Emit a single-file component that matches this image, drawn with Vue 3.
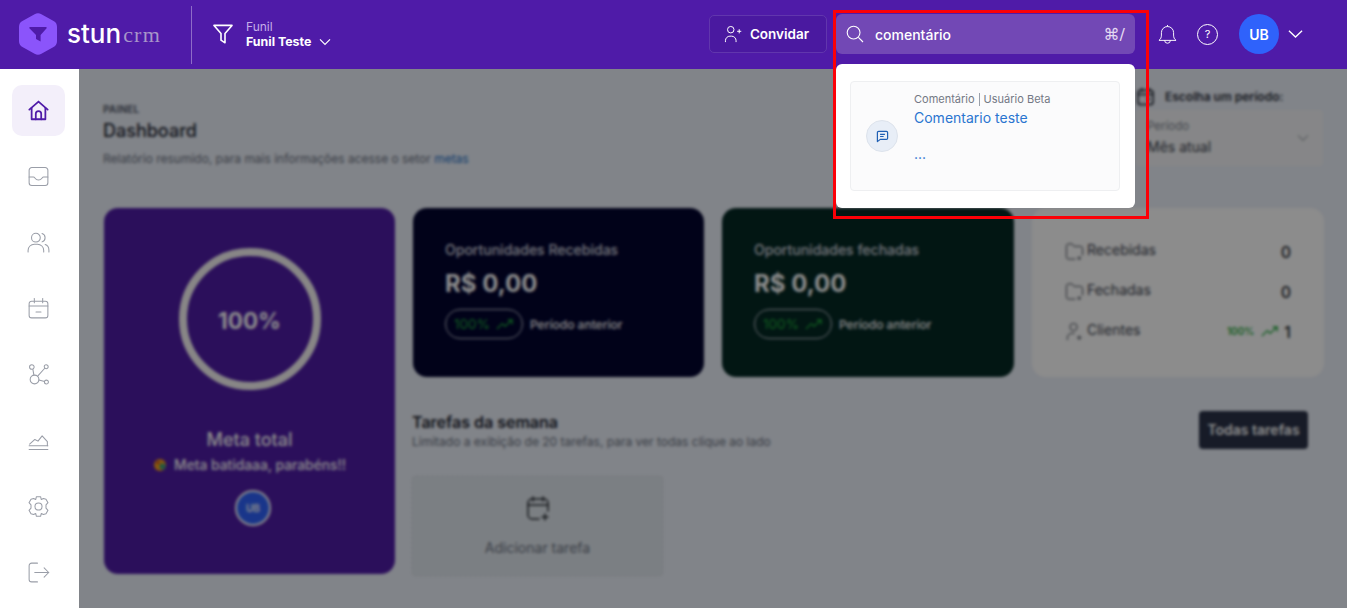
<script setup>
const navItems = [
  { key: 'home', active: true, paths: ['M3.2 11.2 12 3.4l8.8 7.8', 'M5.4 9.6V20.4h13.2V9.6', 'M9.4 20.4v-5.2a2.6 2.6 0 0 1 5.2 0v5.2'] },
  { key: 'inbox', paths: ['M5.6 3.4h12.8a2.6 2.6 0 0 1 2.6 2.6v12a2.6 2.6 0 0 1-2.6 2.6H5.6A2.6 2.6 0 0 1 3 18V6a2.6 2.6 0 0 1 2.6-2.6Z', 'M3 12.4h4.2c1.4 0 1.5 3 4.8 3s3.4-3 4.8-3H21'] },
  { key: 'users', paths: ['M9.5 3.2a4.2 4.2 0 1 1 0 8.4 4.2 4.2 0 0 1 0-8.4Z', 'M2 21v-1.4a6 6 0 0 1 6-6h3a6 6 0 0 1 6 6V21', 'M15.4 3.4a4.2 4.2 0 0 1 0 8', 'M18.4 14c2.2.7 3.6 2.9 3.6 5.4V21'] },
  { key: 'calendar', paths: ['M5.4 5h13.2A2.4 2.4 0 0 1 21 7.4v11.2a2.4 2.4 0 0 1-2.4 2.4H5.4A2.4 2.4 0 0 1 3 18.6V7.4A2.4 2.4 0 0 1 5.4 5Z', 'M3 9.6h18', 'M8 2.4v4', 'M16 2.4v4', 'M9.6 15.4h4.8'] },
  { key: 'share', paths: ['M5.6 2.6a2.2 2.2 0 1 1 0 4.4 2.2 2.2 0 0 1 0-4.4Z', 'M19.4 2.6a1.9 1.9 0 1 1 0 3.8 1.9 1.9 0 0 1 0-3.8Z', 'M19.6 17.4a1.9 1.9 0 1 1 0 3.8 1.9 1.9 0 0 1 0-3.8Z', 'M8.2 12.6a4.2 4.2 0 1 1 0 8.4 4.2 4.2 0 0 1 0-8.4Z', 'M6.6 7l1 5.6', 'M18 6 11.2 13.6', 'M12.4 17.2l5.4 1.6'] },
  { key: 'chart', paths: ['M3 20.6h18', 'M3 17h18', 'M3.5 15.5 8.5 11l3 1.6L15.5 7.5l5 5.5v4'] },
  { key: 'gear', paths: ['M12 8.6a3.4 3.4 0 1 1 0 6.8 3.4 3.4 0 0 1 0-6.8Z', 'M10 2.6h4l.7 2.7 2-.9 2.5.6 1.9 3.3-1.9 2.1v3.2l1.9 2.1-1.9 3.3-2.5.6-2-.9-.7 2.7h-4l-.7-2.7-2 .9-2.5-.6-1.9-3.3 1.9-2.1v-3.2L2.9 8.3l1.9-3.3 2.5-.6 2 .9Z'] },
  { key: 'logout', paths: ['M11 3H5.4A2.4 2.4 0 0 0 3 5.4v13.2A2.4 2.4 0 0 0 5.4 21H11', 'M8.4 12h13.4', 'M17.4 7.6l4.4 4.4-4.4 4.4'] }
]
const stats = [
  { key: 'r', label: 'Recebidas', value: '0', icon: 'folder' },
  { key: 'f', label: 'Fechadas', value: '0', icon: 'folder' },
  { key: 'c', label: 'Clientes', value: '1', icon: 'user', trend: '100%' }
]
const money = [
  { key: 'in', cls: 'navy', title: 'Oportunidades Recebidas' },
  { key: 'out', cls: 'forest', title: 'Oportunidades fechadas' }
]
</script>

<template>
  <div class="app">
    <header class="top">
      <div class="brand">
        <svg class="hex" viewBox="0 0 38 42" aria-hidden="true">
          <path d="M15.6 1.2a7 7 0 0 1 6.8 0l12.2 6.9A6.6 6.6 0 0 1 38 13.8v14.4a6.6 6.6 0 0 1-3.4 5.7l-12.2 6.9a7 7 0 0 1-6.8 0L3.4 33.9A6.6 6.6 0 0 1 0 28.2V13.8a6.6 6.6 0 0 1 3.4-5.7Z" fill="#8b54fb" />
          <path d="M11 14h16a.8.8 0 0 1 .6 1.3L21.6 22v6.6l-4.6-2.6V22l-6.6-6.7A.8.8 0 0 1 11 14Z" fill="#4f1ba8" />
        </svg>
        <span class="stun">stun</span><span class="crm">crm</span>
      </div>
      <div class="divider"></div>
      <div class="funnel">
        <svg class="funnel-ico" viewBox="0 0 20 20" fill="none" stroke="#fff" stroke-width="1.6" stroke-linejoin="round" aria-hidden="true">
          <path d="M1 1.4h18l-7 8.2v9.2l-4-2.6V9.6Z" />
        </svg>
        <div class="funnel-text">
          <span class="funnel-label">Funil</span>
          <span class="funnel-name">Funil Teste</span>
        </div>
        <svg class="chev" viewBox="0 0 12 8" fill="none" stroke="#fff" stroke-width="1.2" aria-hidden="true">
          <path d="M1 1.4 6 6.4l5-5" />
        </svg>
      </div>
      <div class="spacer"></div>
      <button class="invite">
        <svg viewBox="0 0 20 20" fill="none" stroke="#fff" stroke-width="1.1" aria-hidden="true">
          <path d="M7.5 1.6a3.6 3.6 0 1 1 0 7.2 3.6 3.6 0 0 1 0-7.2Z" />
          <path d="M1.6 19v-1.6a5 5 0 0 1 5-5h1.8a5 5 0 0 1 5 5V19" />
          <path d="M14.6 7h4.6M16.9 4.7v4.6" />
        </svg>
        Convidar
      </button>
      <div class="search">
        <svg viewBox="0 0 18 18" fill="none" stroke="#fff" stroke-width="1.1" aria-hidden="true">
          <circle cx="7.6" cy="7.6" r="6.4" />
          <path d="m12.4 12.4 4.6 4.6" />
        </svg>
        <span class="query">comentário</span>
        <span class="shortcut">⌘/</span>
      </div>
      <svg class="bell" viewBox="0 0 20 22" fill="none" stroke="#fff" stroke-width="1" aria-hidden="true">
        <path d="M1 17.2c1.8-1.4 2.6-3 2.6-5.6V9a6.4 6.4 0 0 1 12.8 0v2.6c0 2.6.8 4.2 2.6 5.6Z" />
        <path d="M10 2.6V1M7 17.2a3 3 0 0 0 6 0" />
      </svg>
      <div class="help">?</div>
      <div class="avatar">UB</div>
      <svg class="chev-lg" viewBox="0 0 16 10" fill="none" stroke="#fff" stroke-width="1.4" aria-hidden="true">
        <path d="M1 1.5 8 8.3l7-6.8" />
      </svg>
    </header>

    <div class="shell">
      <aside class="side">
        <div v-for="item in navItems" :key="item.key" class="nav" :class="{ on: item.active }">
          <svg viewBox="0 0 24 24" fill="none" stroke="currentColor" :stroke-width="item.active ? 1.7 : 1" stroke-linecap="round" stroke-linejoin="round" aria-hidden="true">
            <path v-for="d in item.paths" :key="d" :d="d" />
          </svg>
        </div>
      </aside>

      <main class="content">
        <section class="intro">
          <div>
            <div class="crumb">PAINEL</div>
            <h1>Dashboard</h1>
            <p>Relatório resumido, para mais informações acesse o setor <a>metas</a></p>
          </div>
          <div class="period">
            <div class="period-head">
              <svg viewBox="0 0 20 20" fill="none" stroke="#1e2430" stroke-width="1.6" aria-hidden="true">
                <rect x="2" y="3.5" width="16" height="15" rx="3" />
                <path d="M2 8h16M6 1v4M14 1v4M11 13h4" />
              </svg>
              <b>Escolha um período:</b>
            </div>
            <div class="select">
              <div>
                <small>Período</small>
                <span>Mês atual</span>
              </div>
              <svg viewBox="0 0 12 8" fill="none" stroke="#a8acb3" stroke-width="1.2" aria-hidden="true">
                <path d="M1 1.4 6 6.4l5-5" />
              </svg>
            </div>
          </div>
        </section>

        <section class="grid">
          <article class="goal">
            <div class="ring"><span>100%</span></div>
            <h2>Meta total</h2>
            <p class="cheer">
              <svg viewBox="0 0 14 14" aria-hidden="true">
                <circle cx="7" cy="7" r="6" fill="#f7a11a" />
                <circle cx="9.5" cy="8.5" r="3" fill="#3aa07a" />
                <circle cx="5" cy="4.5" r="1.5" fill="#c8401e" />
              </svg>
              Meta batidaaa, parabéns!!
            </p>
            <div class="mini-avatar">UB</div>
          </article>

          <div class="right">
            <div class="cards">
              <article v-for="card in money" :key="card.key" class="money" :class="card.cls">
                <h3>{{ card.title }}</h3>
                <strong>R$ 0,00</strong>
                <div class="compare">
                  <span class="pill">
                    100%
                    <svg viewBox="0 0 20 12" fill="none" stroke="#1fa83a" stroke-width="1.4" aria-hidden="true">
                      <path d="m1 11 6-6 3 3 8-7M13 1h5v5" />
                    </svg>
                  </span>
                  <span class="prev">Período anterior</span>
                </div>
              </article>
              <article class="stats">
                <div v-for="row in stats" :key="row.key" class="stat">
                  <svg viewBox="0 0 20 20" fill="none" stroke="#3a404c" stroke-width="1" aria-hidden="true">
                    <template v-if="row.icon === 'folder'">
                      <path d="M11 18H4a2.5 2.5 0 0 1-2.5-2.5v-11A2.5 2.5 0 0 1 4 2h3.5l2 2.6H16A2.5 2.5 0 0 1 18.5 7v7" />
                      <path d="M15 15v4M13 17h4" />
                    </template>
                    <template v-else>
                      <path d="M9 1.5a3.8 3.8 0 1 1 0 7.6 3.8 3.8 0 0 1 0-7.6Z" />
                      <path d="M2.5 19v-2.5A4.5 4.5 0 0 1 7 12h3" />
                      <path d="M15 14v5M12.5 16.5h5" />
                    </template>
                  </svg>
                  <span class="stat-label">{{ row.label }}</span>
                  <span v-if="row.trend" class="trend">
                    {{ row.trend }}
                    <svg viewBox="0 0 20 12" fill="none" stroke="#1fa83a" stroke-width="1.4" aria-hidden="true">
                      <path d="m1 11 6-6 3 3 8-7M13 1h5v5" />
                    </svg>
                  </span>
                  <span class="stat-value">{{ row.value }}</span>
                </div>
              </article>
            </div>

            <div class="tasks-head">
              <div>
                <h2>Tarefas da semana</h2>
                <p>Limitado a exibição de 20 tarefas, para ver todas clique ao lado</p>
              </div>
              <button class="all">Todas tarefas</button>
            </div>

            <div class="add">
              <svg viewBox="0 0 24 26" fill="none" stroke="#23272e" stroke-width="1.5" stroke-linecap="round" aria-hidden="true">
                <path d="M13 23H6a4 4 0 0 1-4-4V7a4 4 0 0 1 4-4h12a4 4 0 0 1 4 4v8" />
                <path d="M2 9h20M7 1v4M17 1v4M19 18v6M16 21h6" />
              </svg>
              <span>Adicionar tarefa</span>
            </div>
          </div>
        </section>

        <div class="next"></div>
        <div class="veil"></div>
      </main>
    </div>

    <div class="results">
      <div class="hit">
        <div class="hit-ico">
          <svg viewBox="0 0 14 14" fill="none" stroke="#1f5fb4" stroke-width="1.3" stroke-linejoin="round" aria-hidden="true">
            <path d="M2.8 1.5h8.4a1.3 1.3 0 0 1 1.3 1.3v6a1.3 1.3 0 0 1-1.3 1.3H4.6l-3.1 2.4V2.8a1.3 1.3 0 0 1 1.3-1.3Z" />
            <path d="M4.4 4.6h5.2M4.4 7h3.8" />
          </svg>
        </div>
        <div class="hit-text">
          <div class="hit-meta">Comentário <i></i> Usuário Beta</div>
          <div class="hit-title">Comentario teste</div>
          <div class="hit-more">...</div>
        </div>
      </div>
    </div>

    <div class="mark"></div>
  </div>
</template>

<style scoped>
.app {
  position: relative;
  width: 1347px;
  height: 608px;
  overflow: hidden;
  font-family: Inter, "Liberation Sans", sans-serif;
  color: #1e2430;
}
.top {
  height: 69px;
  box-sizing: border-box;
  padding-bottom: 1px;
  background: #4f1ba8;
  display: flex;
  align-items: center;
  color: #fff;
}
.brand {
  display: flex;
  align-items: center;
  width: 191px;
  padding-left: 19px;
  box-sizing: border-box;
  flex: none;
}
.hex {
  width: 38px;
  height: 42px;
  margin-right: 10px;
}
.stun {
  font-family: Inter, sans-serif;
  font-size: 26px;
  font-weight: 500;
  line-height: 1;
}
.crm {
  font-family: "Liberation Serif", serif;
  font-size: 22px;
  letter-spacing: 1.2px;
  color: #a795c9;
  margin-left: 2px;
  margin-top: 2px;
}
.divider {
  width: 1px;
  height: 58px;
  margin-top: 1px;
  background: #8e6cc8;
  flex: none;
}
.funnel {
  display: flex;
  align-items: center;
  margin-left: 21px;
}
.funnel-ico {
  width: 20px;
  height: 20px;
  margin-right: 13px;
}
.funnel-text {
  display: flex;
  flex-direction: column;
  font-size: 12px;
  line-height: 15px;
}
.funnel-label {
  color: #c5aee8;
}
.funnel-name {
  font-size: 12.4px;
  font-weight: 700;
}
.chev {
  width: 12px;
  height: 8px;
  margin: 15px 0 0 8px;
}
.spacer {
  flex: 1;
}
.invite {
  width: 118px;
  height: 38px;
  display: flex;
  align-items: center;
  justify-content: center;
  gap: 8px;
  margin-right: 9px;
  background: #4a19a0;
  border: 1px solid #6136ad;
  border-radius: 5px;
  color: #fff;
  font: 600 13.5px Inter, sans-serif;
  padding: 0 3px 0 0;
}
.invite svg {
  width: 18px;
  height: 18px;
}
.search {
  width: 299px;
  height: 40px;
  box-sizing: border-box;
  display: flex;
  align-items: center;
  padding: 0 10px;
  background: #7248b5;
  border-radius: 6px;
  margin-right: 23px;
}
.search svg {
  width: 18px;
  height: 18px;
  margin-right: 11px;
}
.query {
  flex: 1;
  font-size: 14px;
  font-weight: 500;
}
.shortcut {
  font-size: 16px;
  color: #e3d9f2;
  font-family: "DejaVu Sans", sans-serif;
}
.bell {
  width: 19px;
  height: 21px;
  margin-right: 20px;
}
.help {
  width: 19px;
  height: 19px;
  border: 1px solid #fff;
  border-radius: 50%;
  display: flex;
  align-items: center;
  justify-content: center;
  font-size: 11px;
  margin-right: 21px;
}
.avatar {
  width: 40px;
  height: 40px;
  border-radius: 50%;
  background: #2f62fb;
  display: flex;
  align-items: center;
  justify-content: center;
  font-size: 14px;
  font-weight: 600;
  margin-right: 9px;
}
.chev-lg {
  width: 15px;
  height: 10px;
  margin-right: 44px;
}
.shell {
  display: flex;
  height: 539px;
}
.side {
  width: 79px;
  flex: none;
  background: #fff;
  padding: 16px 14px 0 12px;
  box-sizing: border-box;
  display: flex;
  flex-direction: column;
  gap: 15px;
}
.nav {
  width: 53px;
  height: 51px;
  flex: none;
  display: flex;
  align-items: center;
  justify-content: center;
  border-radius: 10px;
  color: #9a9ea8;
}
.nav.on {
  background: #f3effa;
  color: #4f1ba8;
}
.nav svg {
  width: 25px;
  height: 25px;
}
.content {
  position: relative;
  flex: 1;
  background: #ebf0f9;
  padding: 0 23px 0 25px;
  overflow: hidden;
}
.veil {
  position: absolute;
  inset: 0;
  background: rgba(0, 0, 0, 0.45);
  backdrop-filter: blur(1.6px);
}
.intro {
  display: flex;
  justify-content: space-between;
  height: 139px;
  box-sizing: border-box;
}
.crumb {
  font-size: 10px;
  font-weight: 700;
  letter-spacing: 0.2px;
  color: #5b6270;
  margin: 35px 0 0 -1px;
  line-height: 11px;
}
.intro h1 {
  margin: 5px 0 0 -1px;
  font-size: 18px;
  line-height: 22px;
  font-weight: 500;
  color: #1e2430;
}
.intro p {
  margin: 9px 0 0 -1px;
  font-size: 11.97px;
  line-height: 15px;
  color: #6a7180;
}
.intro a {
  color: #1f6fc4;
}
.period {
  width: 188px;
  padding-top: 17px;
}
.period-head {
  display: flex;
  align-items: center;
  height: 20px;
  font-size: 12px;
  color: #2a2f3a;
  margin-bottom: 4px;
}
.period-head svg {
  width: 19px;
  height: 19px;
  margin-right: 10px;
}
.period-head b {
  font-weight: 600;
  white-space: nowrap;
}
.select {
  height: 56px;
  margin-right: 1px;
  background: #f4f5f7;
  border-radius: 4px;
  display: flex;
  align-items: center;
  justify-content: space-between;
  padding: 0 14px 0 11px;
}
.select small {
  display: block;
  font-size: 11.5px;
  color: #7d8490;
  line-height: 15px;
}
.select span {
  display: block;
  font-size: 14px;
  line-height: 22px;
  margin-top: 2px;
  color: #3a404c;
}
.select svg {
  width: 12px;
  height: 8px;
}
.grid {
  display: flex;
  gap: 18px;
}
.goal {
  width: 291px;
  height: 366px;
  flex: none;
  box-sizing: border-box;
  background: #4f1ca6;
  border-radius: 14px;
  padding-top: 40px;
  display: flex;
  flex-direction: column;
  align-items: center;
  color: #fff;
}
.ring {
  width: 142px;
  height: 142px;
  box-sizing: border-box;
  border: 8px solid #f7f4f4;
  border-radius: 50%;
  display: flex;
  align-items: center;
  justify-content: center;
  font-size: 22.5px;
  font-weight: 700;
}
.ring span {
  padding-top: 2px;
}
.goal h2 {
  margin: 40px 0 0;
  font-size: 18px;
  line-height: 20px;
  font-weight: 500;
}
.cheer {
  margin: 5px 0 0;
  display: flex;
  align-items: center;
  gap: 7px;
  font-size: 13.8px;
  line-height: 20px;
  font-weight: 500;
}
.cheer svg {
  width: 14px;
  height: 14px;
}
.mini-avatar {
  width: 36px;
  height: 36px;
  box-sizing: border-box;
  margin: 15px 0 0 7px;
  border: 2px solid #fff;
  border-radius: 50%;
  background: #2f62fb;
  display: flex;
  align-items: center;
  justify-content: center;
  font-size: 10px;
  font-weight: 600;
}
.right {
  flex: 1;
  min-width: 0;
}
.cards {
  display: grid;
  grid-template-columns: 291px 292px 292px;
  gap: 18px;
  height: 169px;
}
.money {
  border-radius: 14px;
  padding: 34px 0 0 32px;
  box-sizing: border-box;
  color: #fff;
}
.navy {
  background: #02042f;
}
.forest {
  background: #042824;
}
.money h3 {
  margin: 0;
  font-size: 14px;
  line-height: 16px;
  font-weight: 500;
  color: #d9dbe2;
}
.money strong {
  display: block;
  margin-top: 11px;
  font-size: 24px;
  line-height: 30px;
  font-weight: 700;
}
.compare {
  display: flex;
  align-items: center;
  gap: 7px;
  margin-top: 10px;
}
.pill {
  width: 78px;
  height: 30px;
  box-sizing: border-box;
  border: 1px solid #c9cdd6;
  border-radius: 15px;
  display: flex;
  align-items: center;
  justify-content: center;
  gap: 6px;
  font-size: 13.5px;
  color: #1fa83a;
}
.pill svg {
  width: 18px;
  height: 11px;
}
.prev {
  font-size: 12px;
  font-weight: 500;
}
.stats {
  background: #fff;
  border-radius: 14px;
  padding: 23px 33px 0 33px;
  box-sizing: border-box;
}
.stat {
  display: flex;
  align-items: center;
  height: 40px;
  font-size: 14px;
  color: #3a404c;
}
.stat svg {
  width: 19px;
  height: 19px;
  margin-right: 3px;
}
.stat-label {
  flex: 1;
  margin-top: -3px;
}
.stat-value {
  padding-top: 2px;
  font-size: 16px;
  font-weight: 500;
  color: #23272e;
}
.trend {
  display: flex;
  align-items: center;
  gap: 7px;
  margin-right: 5px;
  font-size: 10px;
  font-weight: 600;
  color: #1fa83a;
}
.trend svg {
  width: 18px;
  height: 11px;
  margin: 0;
}
.tasks-head {
  display: flex;
  justify-content: space-between;
  align-items: flex-start;
  margin-top: 34px;
  padding-right: 16px;
}
.tasks-head h2 {
  margin: 1px 0 0 -1px;
  font-size: 16px;
  line-height: 20px;
  font-weight: 600;
  color: #1e2430;
}
.tasks-head p {
  margin: 2px 0 0 -1px;
  font-size: 12px;
  line-height: 16px;
  color: #6a7180;
}
.all {
  width: 109px;
  height: 38px;
  border: 0;
  border-radius: 4px;
  background: #2a3248;
  color: #fff;
  font: 600 14px Inter, sans-serif;
  padding: 0 0 2px;
}
.add {
  width: 251px;
  height: 100px;
  box-sizing: border-box;
  margin: 26px 0 0 -1px;
  background: #e1e8ef;
  border: 1px dashed #cfd6de;
  border-radius: 4px;
  display: flex;
  flex-direction: column;
  align-items: center;
  color: #6a7180;
  font-size: 14px;
}
.add svg {
  width: 24px;
  height: 26px;
  margin-top: 19px;
}
.add span {
  margin-top: 17px;
}
.next {
  width: 378px;
  height: 30px;
  margin: 32px 0 0 8px;
  background: #e5e8f2;
  border-top: 2px solid #6d75b8;
}
.results {
  position: absolute;
  left: 836px;
  top: 64px;
  width: 299px;
  height: 144px;
  box-sizing: border-box;
  background: #fff;
  border-radius: 6px;
  padding: 17px 15px 17px 14px;
}
.hit {
  height: 110px;
  box-sizing: border-box;
  background: #fbfbfc;
  border: 1px solid #eeeff1;
  border-radius: 4px;
  display: flex;
  align-items: center;
  padding-left: 15px;
}
.hit-ico {
  width: 32px;
  height: 32px;
  box-sizing: border-box;
  flex: none;
  border: 1px solid #dde3ec;
  border-radius: 50%;
  background: #e8eef7;
  display: flex;
  align-items: center;
  justify-content: center;
  margin-right: 16px;
}
.hit-ico svg {
  width: 13px;
  height: 13px;
}
.hit-text {
  align-self: flex-start;
  padding-top: 10px;
}
.hit-meta {
  display: flex;
  align-items: center;
  gap: 4px;
  font-size: 11px;
  line-height: 14px;
  color: #737884;
}
.hit-meta i {
  width: 1px;
  height: 13px;
  background: #9aa0aa;
}
.hit-title {
  margin-top: 3px;
  font-size: 14px;
  line-height: 18px;
  color: #2a75d0;
}
.hit-more {
  margin-top: 18px;
  font-size: 14px;
  line-height: 18px;
  color: #2a75d0;
}
.mark {
  position: absolute;
  left: 833px;
  top: 10px;
  width: 316px;
  height: 209px;
  box-sizing: border-box;
  border: 3px solid #fb0007;
}
</style>
